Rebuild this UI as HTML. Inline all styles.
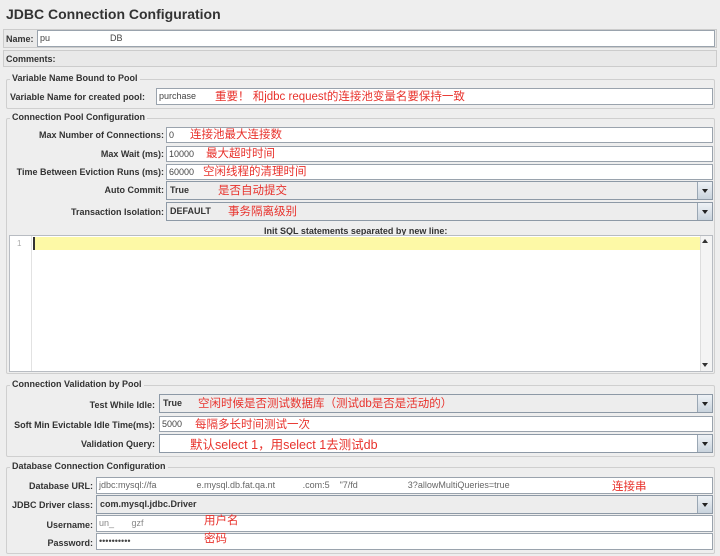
<!DOCTYPE html>
<html><head><meta charset="utf-8"><style>
*{box-sizing:border-box;margin:0;padding:0}
body{width:720px;height:556px;background:#eeeeee;font-family:"Liberation Sans",sans-serif;font-size:9px;color:#222;position:relative;overflow:hidden}
.a{position:absolute}
.t{font-weight:bold;font-size:14px;color:#333;left:6px;top:6px}
.row{position:absolute;left:3px;right:3px;border:1px solid #ccc;background:#e9e9e9}
.lab{position:absolute;font-weight:bold;font-size:9px;color:#333;white-space:nowrap;text-align:right}
.in{position:absolute;background:#fff;border:1px solid #9aa3ad;font-size:9px;color:#444;padding:2px 2px;white-space:nowrap;overflow:hidden}
.cb{position:absolute;background:#ededed;border:1px solid #8d99a6;font-size:9px;font-weight:bold;color:#333;padding:3px 3px;white-space:nowrap}
.cb .btn{position:absolute;right:0;top:0;bottom:0;width:15px;background:linear-gradient(#eef2f6,#c9d3dd);border-left:1px solid #9aa7b4}
.cb .btn:after{content:"";position:absolute;left:4px;top:7px;border-left:3.5px solid transparent;border-right:3.5px solid transparent;border-top:4px solid #222}
.grp{position:absolute;left:6px;right:5px;border:1px solid #cfcfcf;border-radius:2px}
.leg{position:absolute;font-weight:bold;font-size:9px;color:#333;background:#eeeeee;padding:0 2px;left:10px}
.r{position:absolute;color:#e8322c;font-family:"Liberation Sans","Noto Sans CJK SC",sans-serif;font-size:11.5px;white-space:nowrap;font-weight:normal}
</style></head><body>
<div class="a t">JDBC Connection Configuration</div>

<div class="row" style="top:29px;height:19px"></div>
<div class="lab" style="left:6px;top:34px">Name:</div>
<div class="in" style="left:37px;top:30px;width:678px;height:17px">pu&nbsp;&nbsp;&nbsp;&nbsp;&nbsp;&nbsp;&nbsp;&nbsp;&nbsp;&nbsp;&nbsp;&nbsp;&nbsp;&nbsp;&nbsp;&nbsp;&nbsp;&nbsp;&nbsp;&nbsp;&nbsp;&nbsp;&nbsp;&nbsp;DB</div>
<div class="row" style="top:50px;height:17px"></div>
<div class="lab" style="left:6px;top:54px">Comments:</div>

<div class="grp" style="top:79px;height:30px"></div>
<div class="leg" style="top:73px">Variable Name Bound to Pool</div>
<div class="lab" style="left:10px;top:92px">Variable Name for created pool:</div>
<div class="in" style="left:156px;top:88px;width:557px;height:17px">purchase</div>
<div class="r" style="left:215px;top:88px">重要！ 和jdbc request的连接池变量名要保持一致</div>

<div class="grp" style="top:118px;height:256px"></div>
<div class="leg" style="top:112px">Connection Pool Configuration</div>
<div class="lab" style="right:556px;top:130px">Max Number of Connections:</div>
<div class="in" style="left:166px;top:127px;width:547px;height:16px">0</div>
<div class="r" style="left:190px;top:126px">连接池最大连接数</div>
<div class="lab" style="right:556px;top:149px">Max Wait (ms):</div>
<div class="in" style="left:166px;top:146px;width:547px;height:16px">10000</div>
<div class="r" style="left:206px;top:145px">最大超时时间</div>
<div class="lab" style="right:556px;top:167px">Time Between Eviction Runs (ms):</div>
<div class="in" style="left:166px;top:164px;width:547px;height:16px">60000</div>
<div class="r" style="left:203px;top:163px">空闲线程的清理时间</div>
<div class="lab" style="right:556px;top:185px">Auto Commit:</div>
<div class="cb" style="left:166px;top:181px;width:547px;height:19px">True<div class="btn"></div></div>
<div class="r" style="left:218px;top:182px">是否自动提交</div>
<div class="lab" style="right:556px;top:207px">Transaction Isolation:</div>
<div class="cb" style="left:166px;top:202px;width:547px;height:19px">DEFAULT<div class="btn"></div></div>
<div class="r" style="left:228px;top:203px">事务隔离级别</div>
<div class="lab" style="left:264px;top:226px">Init SQL statements separated by new line:</div>
<div class="a" style="left:9px;top:235px;width:704px;height:137px;background:#fff;border:1px solid #b8bcc2"></div>
<div class="a" style="left:10px;top:236px;width:22px;height:135px;border-right:1px solid #e2e2e2;color:#aaa;font-size:8px;padding:3px 0 0 7px">1</div>
<div class="a" style="left:33px;top:237px;width:667px;height:13px;background:#fdf9a6;border-left:2px solid #333"></div>
<div class="a" style="left:700px;top:236px;width:12px;height:135px;background:#f4f4f4;border-left:1px solid #ddd"></div>
<div class="a" style="left:702px;top:239px;border-left:3px solid transparent;border-right:3px solid transparent;border-bottom:4px solid #333"></div>
<div class="a" style="left:702px;top:363px;border-left:3px solid transparent;border-right:3px solid transparent;border-top:4px solid #333"></div>

<div class="grp" style="top:385px;height:72px"></div>
<div class="leg" style="top:379px">Connection Validation by Pool</div>
<div class="lab" style="right:565px;top:400px">Test While Idle:</div>
<div class="cb" style="left:159px;top:394px;width:554px;height:19px">True<div class="btn"></div></div>
<div class="r" style="left:198px;top:395px">空闲时候是否测试数据库（测试db是否是活动的）</div>
<div class="lab" style="right:565px;top:420px">Soft Min Evictable Idle Time(ms):</div>
<div class="in" style="left:159px;top:416px;width:554px;height:16px">5000</div>
<div class="r" style="left:195px;top:416px">每隔多长时间测试一次</div>
<div class="lab" style="right:565px;top:439px">Validation Query:</div>
<div class="cb" style="left:159px;top:434px;width:554px;height:19px;background:#fff"><div class="btn"></div></div>
<div class="r" style="left:190px;top:434px;font-size:12.5px">默认select 1，用select 1去测试db</div>

<div class="grp" style="top:467px;height:87px"></div>
<div class="leg" style="top:461px">Database Connection Configuration</div>
<div class="lab" style="right:627px;top:481px">Database URL:</div>
<div class="in" style="left:96px;top:477px;width:617px;height:17px;color:#666">jdbc:mysql://fa&nbsp;&nbsp;&nbsp;&nbsp;&nbsp;&nbsp;&nbsp;&nbsp;&nbsp;&nbsp;&nbsp;&nbsp;&nbsp;&nbsp;&nbsp;&nbsp;e.mysql.db.fat.qa.nt&nbsp;&nbsp;&nbsp;&nbsp;&nbsp;&nbsp;&nbsp;&nbsp;&nbsp;&nbsp;&nbsp;.com:5&nbsp;&nbsp;&nbsp;&nbsp;"7/fd&nbsp;&nbsp;&nbsp;&nbsp;&nbsp;&nbsp;&nbsp;&nbsp;&nbsp;&nbsp;&nbsp;&nbsp;&nbsp;&nbsp;&nbsp;&nbsp;&nbsp;&nbsp;&nbsp;&nbsp;3?allowMultiQueries=true</div>
<div class="r" style="left:612px;top:478px">连接串</div>
<div class="lab" style="right:627px;top:500px">JDBC Driver class:</div>
<div class="cb" style="left:96px;top:495px;width:617px;height:19px">com.mysql.jdbc.Driver<div class="btn"></div></div>
<div class="lab" style="right:627px;top:520px">Username:</div>
<div class="in" style="left:96px;top:515px;width:617px;height:17px;color:#888">un_&nbsp;&nbsp;&nbsp;&nbsp;&nbsp;&nbsp;&nbsp;gzf</div>
<div class="r" style="left:204px;top:512px">用户名</div>
<div class="lab" style="right:627px;top:538px">Password:</div>
<div class="in" style="left:96px;top:533px;width:617px;height:17px">••••••••••</div>
<div class="r" style="left:204px;top:530px">密码</div>
</body></html>
